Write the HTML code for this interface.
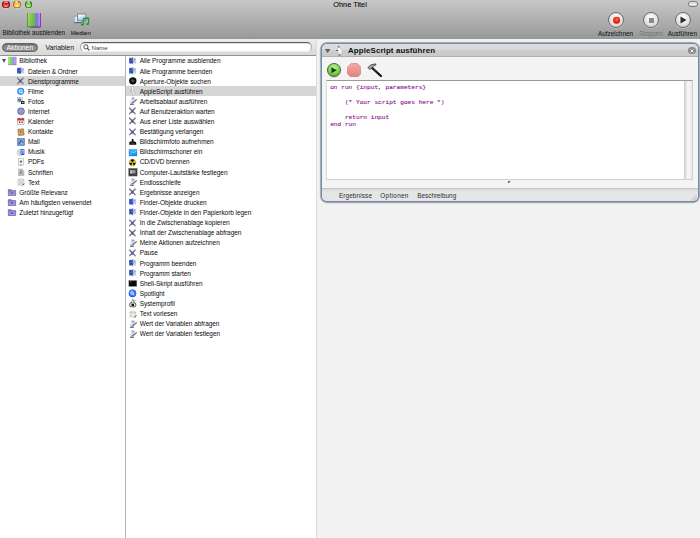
<!DOCTYPE html>
<html><head><meta charset="utf-8">
<style>
*{margin:0;padding:0;box-sizing:border-box}
html,body{width:700px;height:538px;overflow:hidden;background:#f2f2f2;font-family:"Liberation Sans",sans-serif;color:#111}
.abs{position:absolute}
#toolbar{position:absolute;left:0;top:0;width:700px;height:38.6px;background:linear-gradient(#c8c8c8,#989898)}
.light{position:absolute;top:0.5px;width:7.6px;height:7.6px;border-radius:50%}
#title{position:absolute;left:0;width:700px;top:0;text-align:center;font-size:7.4px;line-height:9px;color:#000;-webkit-text-stroke:0.05px #000}
.tlabel{position:absolute;font-size:6.4px;line-height:7.8px;color:#141418;white-space:nowrap;-webkit-text-stroke:0.04px #000}
.rbtn{position:absolute;top:12px;width:16px;height:16px;border-radius:50%;background:radial-gradient(circle at 50% 35%,#fdfdfd,#e4e4e4 55%,#b8b8b8);border:0.8px solid #6a6a6a;box-shadow:0 0.6px 0.6px rgba(255,255,255,.6)}
#filter{position:absolute;left:0;top:38.6px;width:316px;height:17.2px;background:linear-gradient(#ececec,#d8d8d8);border-bottom:1px solid #939393}
#pill{position:absolute;left:1.9px;top:43px;padding-top:0.3px;width:36px;height:9px;border-radius:4.5px;background:#8b8b8b;border:0.7px solid #666;color:#fff;font-size:6.9px;line-height:7.6px;text-align:center;box-shadow:inset 0 0.8px 1px rgba(0,0,0,.3)}
#var{position:absolute;left:45.4px;top:44.2px;font-size:6.9px;line-height:7.6px;color:#111}
#search{position:absolute;left:80.2px;top:42px;width:231.8px;height:10.4px;border-radius:5.2px;background:#fff;border:1px solid #a8a8a8;border-top-color:#5e5e5e;border-bottom-color:#ececec;box-shadow:inset 0 0.6px 0.6px rgba(0,0,0,.25)}
#search .t{position:absolute;left:10.3px;top:1.2px;font-size:6.1px;line-height:7px;color:#404048}
.pane{position:absolute;top:55.8px;height:482.2px;background:#fff;overflow:hidden}
#lp{left:0;width:124.8px}
#rp{left:126.4px;width:189.6px}
#div1{position:absolute;left:124.8px;top:55.8px;width:1.6px;height:482.2px;background:#b4b4b4}
#div2{position:absolute;left:316px;top:38.6px;width:1.4px;height:500px;background:linear-gradient(90deg,#cfcfcf,#e8e8e8)}
.row{position:absolute;left:0;width:100%;height:10.11px}
.row.sel{background:#d6d6d6}
.row .ic{position:absolute;top:1.0px;width:8px;height:8px}
.ic svg{overflow:visible}
.ic svg,svg{display:block}
.row .t{position:absolute;top:1.6px;font-size:6.5px;letter-spacing:-0.05px;line-height:7px;white-space:nowrap;color:#0a0a0a}
.tri{position:absolute;left:2px;top:3.2px;width:0;height:0;border-left:2.4px solid transparent;border-right:2.4px solid transparent;border-top:4px solid #555}
#box{position:absolute;left:321.5px;top:43.8px;width:376.3px;height:156.9px;border-radius:5px;box-shadow:0 0 0 1.5px #7b8aa2,0 0 0 2.3px rgba(140,152,175,.35),0 2px 2px rgba(0,0,0,.12);background:#f4f4f4;overflow:hidden}
#bhead{position:absolute;left:0;top:0.3px;width:100%;height:13.2px;background:linear-gradient(#dedede,#dadada 45%,#cdcdcd 50%,#cacaca);border-bottom:0.8px solid #b0b0b0}
#btitle{position:absolute;left:26.5px;top:1.6px;letter-spacing:0.12px;font-size:7.9px;line-height:9px;font-weight:bold;color:#111;white-space:nowrap}
#code{position:absolute;left:4.5px;top:36.3px;width:367px;height:99.6px;background:#fff;border-top:1px solid #9a9a9a;border-left:0.6px solid #d8d8d8;border-right:0.6px solid #d0d0d0;border-bottom:0.6px solid #d0d0d0}
#code pre{position:absolute;left:3.2px;top:3.0px;font-family:"Liberation Mono",monospace;font-size:6.15px;line-height:7.4px;color:#86108e;-webkit-text-stroke:0.1px #86108e}
#scroll{position:absolute;right:0;top:0;width:8px;height:100%;background:linear-gradient(90deg,#d8d8d8,#f8f8f8 40%,#eaeaea);border-left:0.6px solid #cfcfcf}
#bbar{position:absolute;left:0;top:144.5px;width:100%;height:14px;background:linear-gradient(#d8d8d8,#e6e6e6 25%,#e6e6e6);border-top:0.8px solid #c4c4c4}
.blabel{position:absolute;top:2.4px;font-size:6.3px;line-height:7px;color:#2a2a2a;white-space:nowrap}
</style></head><body>
<div id="toolbar"></div>
<div class="light" style="left:2.2px;background:radial-gradient(circle at 50% 75%,#ff9a9a 0,#e84848 35%,#c01818 70%,#a00c0c 100%);box-shadow:inset 0 0 0 0.7px rgba(110,0,0,.8),0 0.5px 0.6px rgba(255,255,255,.45)"><div class="abs" style="left:2.6px;top:2.6px;width:2.4px;height:2.4px;border-radius:50%;background:rgba(90,0,0,.55)"></div><div class="abs" style="left:2.2px;top:0.8px;width:3.2px;height:1.6px;border-radius:50%;background:rgba(255,230,230,.6)"></div></div>
<div class="light" style="left:13.1px;background:radial-gradient(circle at 50% 75%,#fff09a 0,#f8c850 35%,#e89a20 70%,#c07010 100%);box-shadow:inset 0 0 0 0.7px rgba(140,80,0,.8),0 0.5px 0.6px rgba(255,255,255,.45)"><div class="abs" style="left:2.2px;top:0.8px;width:3.2px;height:1.6px;border-radius:50%;background:rgba(255,250,230,.7)"></div></div>
<div class="light" style="left:24.5px;background:radial-gradient(circle at 50% 75%,#c8f8a0 0,#88d058 35%,#50a828 70%,#3a8a18 100%);box-shadow:inset 0 0 0 0.7px rgba(30,80,0,.8),0 0.5px 0.6px rgba(255,255,255,.45)"><div class="abs" style="left:2.2px;top:0.8px;width:3.2px;height:1.6px;border-radius:50%;background:rgba(240,255,230,.7)"></div></div>
<div id="title">Ohne Titel</div>
<!-- library icon -->
<div class="abs" style="left:27.2px;top:13px;width:14px;height:13.6px;box-shadow:0 0.8px 0.8px rgba(0,0,0,.35)">
 <div class="abs" style="left:0;top:0;width:7.4px;height:13.6px;background:linear-gradient(100deg,#a8e070,#7cc048 60%,#6ab03a);box-shadow:inset 0.6px -0.6px 0 rgba(40,60,30,.7)"></div>
 <div class="abs" style="left:7.4px;top:0;width:2.2px;height:13.6px;background:linear-gradient(90deg,#3a70c0,#7ab0f0,#3a70c0);box-shadow:inset 0 -0.6px 0 rgba(30,40,80,.7)"></div>
 <div class="abs" style="left:9.6px;top:0;width:4.4px;height:13.6px;background:linear-gradient(90deg,#9a58c8,#c890f0 50%,#a060d0);box-shadow:inset -0.6px -0.6px 0 rgba(60,30,90,.7)"></div>
</div>
<div class="tlabel" style="left:2.6px;top:29.2px">Bibliothek ausblenden</div>
<!-- medien icon -->
<svg class="abs" style="left:73px;top:13px" width="17" height="13" viewBox="0 0 17 13">
<defs><linearGradient id="mb" x1="0" y1="0" x2="0" y2="1"><stop offset="0" stop-color="#f0f6ff"/><stop offset="1" stop-color="#9cc4ec"/></linearGradient></defs>
<rect x="1.2" y="3.2" width="7.6" height="6.6" fill="#dce8f6" stroke="#8a96a8" stroke-width="0.7"/>
<rect x="4.4" y="1" width="8.4" height="6.8" fill="url(#mb)" stroke="#6a7a90" stroke-width="0.8"/>
<path d="M5.5 2.6h3M5.5 4.2h2" stroke="#fff" stroke-width="0.8"/>
<rect x="1.5" y="9.2" width="7" height="0.9" fill="#404a58"/>
<path d="M10.4 11.4V5.6L15.6 5.2V10.8" stroke="#1a9a2a" stroke-width="1.1" fill="none"/>
<path d="M10.4 5.6L15.6 5.2" stroke="#1a9a2a" stroke-width="1.5"/>
<ellipse cx="9.4" cy="11.6" rx="1.5" ry="1.1" fill="#1a9a2a"/>
<ellipse cx="14.6" cy="11" rx="1.5" ry="1.1" fill="#1a9a2a"/>
</svg>
<div class="tlabel" style="left:70.7px;top:29.2px;font-size:6.2px">Medien</div>
<!-- right toolbar -->
<div class="abs" style="left:688px;top:1.2px;width:10.4px;height:5.9px;border-radius:2.9px;background:linear-gradient(#e8e8e8,#d8d8d8 45%,#fafafa 55%,#c8c8c8);border:1px solid #7a7a7a"></div>
<div class="rbtn" style="left:607.7px"><svg class="abs" style="left:0;top:0" width="14.4" height="14.4" viewBox="0 0 14.4 14.4"><defs><radialGradient id="rd" cx="50%" cy="40%" r="55%"><stop offset="0" stop-color="#ff6a4a"/><stop offset="1" stop-color="#dd0800"/></radialGradient></defs><circle cx="7.6" cy="7.3" r="3.5" fill="url(#rd)"/></svg></div>
<div class="rbtn" style="left:642.6px"><div class="abs" style="left:5px;top:5px;width:5.4px;height:5.4px;background:#8a8a8a"></div></div>
<div class="rbtn" style="left:674.5px"><svg class="abs" style="left:4px;top:3.2px" width="7" height="8" viewBox="0 0 7 8"><path d="M0.5 0.5L6.5 4L0.5 7.5z" fill="#2e2e2e"/></svg></div>
<div class="tlabel" style="left:597.9px;top:29.8px">Aufzeichnen</div>
<div class="tlabel" style="left:639px;top:29.8px;color:#6e6e6e;-webkit-text-stroke:0;text-shadow:0 0.7px 0 rgba(255,255,255,.18)">Stoppen</div>
<div class="tlabel" style="left:667.8px;top:29.8px">Ausführen</div>

<div id="filter"></div>
<div id="pill">Aktionen</div>
<div id="var">Variablen</div>
<div id="search"><svg class="abs" style="left:2.1px;top:0.9px" width="7" height="7" viewBox="0 0 7 7"><circle cx="2.9" cy="2.9" r="2.1" fill="none" stroke="#3a3a3a" stroke-width="0.9"/><path d="M4.4 4.4L6.4 6.4" stroke="#3a3a3a" stroke-width="1.2"/></svg><div class="t">Name</div></div>

<div class="pane" id="lp"><div style="position:absolute;left:0;top:-55.8px;width:100%;height:600px">
<div class="row" style="top:55.80px"><div class="tri"></div><div class="ic" style="left:8.3px"><svg viewBox="0 0 16 16" width="100%" height="100%"><rect x="0" y="-0.4" width="8.2" height="16" fill="#8ed05a"/><rect x="0.8" y="0" width="2.4" height="15" fill="#b8ea8a"/><rect x="8.2" y="-0.4" width="4" height="16" fill="#5a9ae0"/><rect x="9.4" y="0" width="1.4" height="15" fill="#9ac8f8"/><rect x="12.2" y="-0.4" width="4.8" height="16" fill="#b07ce0"/><rect x="13.2" y="0" width="1.6" height="15" fill="#d0a8f4"/><path d="M0 15.6H17" stroke="#555" stroke-width="0.8"/></svg></div><div class="t" style="left:19.3px">Bibliothek</div></div>
<div class="row" style="top:65.91px"><div class="ic" style="left:17.2px"><svg viewBox="0 0 16 16" width="100%" height="100%"><rect x="0.3" y="1.8" width="13.8" height="11" fill="#bccbf0"/><rect x="0.3" y="1.8" width="7" height="11" fill="#3a60c8"/><path d="M8 0L6.2 4.5L8.5 7.5L6.5 12.5L8 15" stroke="#333" stroke-width="0.9" fill="none"/><path d="M2.5 5h1.5M10 5h1.5M2.5 9.5c1.5 1 3 1 4.5 0.3" stroke="#0a1a70" stroke-width="1.1" fill="none"/></svg></div><div class="t" style="left:27.9px">Dateien &amp; Ordner</div></div>
<div class="row sel" style="top:76.02px"><div class="ic" style="left:17.2px"><svg viewBox="0 0 16 16" width="100%" height="100%"><path d="M1.2 2.2L12.3 13.4M12.3 2.2L1.2 13.4" stroke="#8886ae" stroke-width="3" stroke-linecap="round"/><path d="M3.5 4.5L10 11.1M10 4.5L3.5 11.1" stroke="#4c4a64" stroke-width="1.8"/></svg></div><div class="t" style="left:27.9px">Dienstprogramme</div></div>
<div class="row" style="top:86.13px"><div class="ic" style="left:17.2px"><svg viewBox="0 0 16 16" width="100%" height="100%"><circle cx="7.5" cy="8.5" r="7" fill="#1a7ae0"/><circle cx="7.5" cy="8.5" r="6" fill="#3a98f0"/><circle cx="7.5" cy="8.5" r="3" fill="none" stroke="#fff" stroke-width="2"/><path d="M9.5 10.5l3 3" stroke="#fff" stroke-width="2"/></svg></div><div class="t" style="left:27.9px">Filme</div></div>
<div class="row" style="top:96.24px"><div class="ic" style="left:17.2px"><svg viewBox="0 0 16 16" width="100%" height="100%"><rect x="1" y="1" width="10" height="9" fill="#e8e0d0" stroke="#777" stroke-width=".6"/><circle cx="5" cy="6" r="3.5" fill="#3a80e0"/><path d="M6 9l2-3" stroke="#a03010" stroke-width="1.5"/><rect x="8" y="8" width="7" height="6" rx="1" fill="#222"/><rect x="10" y="10" width="3" height="2" fill="#ddd"/></svg></div><div class="t" style="left:27.9px">Fotos</div></div>
<div class="row" style="top:106.35px"><div class="ic" style="left:17.2px"><svg viewBox="0 0 16 16" width="100%" height="100%"><circle cx="8" cy="8.5" r="7" fill="#6a74b0" stroke="#40487a" stroke-width=".8"/><circle cx="8" cy="8.5" r="4.5" fill="none" stroke="#d0d4ec" stroke-width="1"/><path d="M1.5 8.5h13M8 1.5v14" stroke="#c0c6e4" stroke-width="1" fill="none"/></svg></div><div class="t" style="left:27.9px">Internet</div></div>
<div class="row" style="top:116.46px"><div class="ic" style="left:17.2px"><svg viewBox="0 0 16 16" width="100%" height="100%"><rect x="1" y="3" width="13" height="12" fill="#f8f8f8" stroke="#666" stroke-width=".8"/><rect x="1" y="3" width="13" height="4" fill="#e02a2a"/><circle cx="4" cy="2.5" r="1.2" fill="#c02020"/><circle cx="11" cy="2.5" r="1.2" fill="#c02020"/><rect x="4" y="9" width="2.5" height="3" fill="#222"/><rect x="9" y="9" width="2.5" height="3" fill="#444"/></svg></div><div class="t" style="left:27.9px">Kalender</div></div>
<div class="row" style="top:126.57px"><div class="ic" style="left:17.2px"><svg viewBox="0 0 16 16" width="100%" height="100%"><path d="M1.5 2.5L13 1.5L14.5 14L3 15.5z" fill="#c49a50" stroke="#6a4a20" stroke-width=".8"/><rect x="5" y="5" width="5" height="6" fill="#e0c080"/><circle cx="7.5" cy="7.5" r="1.8" fill="#8a6030"/></svg></div><div class="t" style="left:27.9px">Kontakte</div></div>
<div class="row" style="top:136.68px"><div class="ic" style="left:17.2px"><svg viewBox="0 0 16 16" width="100%" height="100%"><rect x="1" y="1" width="14" height="14" fill="#5a88e0" stroke="#2a4a90" stroke-width=".8"/><rect x="3" y="3" width="10" height="10" fill="#8ab0f0"/><path d="M4 12L8 5L12 9" stroke="#3a2a10" stroke-width="1.8" fill="none"/></svg></div><div class="t" style="left:27.9px">Mail</div></div>
<div class="row" style="top:146.79px"><div class="ic" style="left:17.2px"><svg viewBox="0 0 16 16" width="100%" height="100%"><circle cx="6.5" cy="9" r="6.5" fill="#dfe8f2" stroke="#7a8aa0" stroke-width=".6"/><path d="M3 6l4 4M3 12l3-3" stroke="#e0a030" stroke-width="1.2"/><rect x="7" y="2" width="8" height="12" rx="1.5" fill="#2a6ae0"/><path d="M9.5 12V5l4-1v7" stroke="#fff" stroke-width="1.2" fill="none"/></svg></div><div class="t" style="left:27.9px">Musik</div></div>
<div class="row" style="top:156.90px"><div class="ic" style="left:17.2px"><svg viewBox="0 0 16 16" width="100%" height="100%"><rect x="2.5" y="1" width="11" height="14.5" fill="#fcfcfc" stroke="#888" stroke-width=".8"/><path d="M5 8l3-4 3 3-3 3z" fill="#5070c0"/><path d="M6 7l2 2" stroke="#a04020" stroke-width="1.4"/><path d="M5 13h5" stroke="#666" stroke-width="1"/></svg></div><div class="t" style="left:27.9px">PDFs</div></div>
<div class="row" style="top:167.01px"><div class="ic" style="left:17.2px"><svg viewBox="0 0 16 16" width="100%" height="100%"><path d="M3 2h7l4 4v9H3z" fill="#c8c8c8" stroke="#888" stroke-width=".8"/><path d="M5 13l3-8 3 8M6 10h4" stroke="#6a6a6a" stroke-width="1.2" fill="none"/></svg></div><div class="t" style="left:27.9px">Schriften</div></div>
<div class="row" style="top:177.12px"><div class="ic" style="left:17.2px"><svg viewBox="0 0 16 16" width="100%" height="100%"><ellipse cx="8" cy="4" rx="6" ry="2.5" fill="#f4f4f4" stroke="#888" stroke-width=".7"/><rect x="2" y="4" width="12" height="10" fill="#ececec" stroke="#888" stroke-width=".7"/><path d="M4 8h8M4 10.5h8" stroke="#999" stroke-width=".8"/><path d="M11 15l3-4" stroke="#222" stroke-width="1.4"/></svg></div><div class="t" style="left:27.9px">Text</div></div>
<div class="row" style="top:187.23px"><div class="ic" style="left:8.3px"><svg viewBox="0 0 16 16" width="100%" height="100%"><path d="M0.5 3h6l1.5 2h7.5v10h-15z" fill="#8a74c8" stroke="#5a4a98" stroke-width=".7"/><rect x="0.5" y="6" width="15" height="9" fill="#a898e0" stroke="#5a4a98" stroke-width=".7"/><rect x="5" y="8" width="6" height="4" rx="1" fill="#7a68b8"/></svg></div><div class="t" style="left:19.3px">Größte Relevanz</div></div>
<div class="row" style="top:197.34px"><div class="ic" style="left:8.3px"><svg viewBox="0 0 16 16" width="100%" height="100%"><path d="M0.5 3h6l1.5 2h7.5v10h-15z" fill="#8a74c8" stroke="#5a4a98" stroke-width=".7"/><rect x="0.5" y="6" width="15" height="9" fill="#a898e0" stroke="#5a4a98" stroke-width=".7"/><rect x="5" y="8" width="6" height="4" rx="1" fill="#7a68b8"/></svg></div><div class="t" style="left:19.3px">Am häufigsten verwendet</div></div>
<div class="row" style="top:207.45px"><div class="ic" style="left:8.3px"><svg viewBox="0 0 16 16" width="100%" height="100%"><path d="M0.5 3h6l1.5 2h7.5v10h-15z" fill="#8a74c8" stroke="#5a4a98" stroke-width=".7"/><rect x="0.5" y="6" width="15" height="9" fill="#a898e0" stroke="#5a4a98" stroke-width=".7"/><rect x="5" y="8" width="6" height="4" rx="1" fill="#7a68b8"/></svg></div><div class="t" style="left:19.3px">Zuletzt hinzugefügt</div></div>
</div></div>
<div id="div1"></div>
<div class="pane" id="rp"><div style="position:absolute;left:0;top:-55.8px;width:100%;height:600px">
<div class="row" style="top:55.80px"><div class="ic" style="left:2.4px"><svg viewBox="0 0 16 16" width="100%" height="100%"><rect x="0.3" y="1.8" width="13.8" height="11" fill="#bccbf0"/><rect x="0.3" y="1.8" width="7" height="11" fill="#3a60c8"/><path d="M8 0L6.2 4.5L8.5 7.5L6.5 12.5L8 15" stroke="#333" stroke-width="0.9" fill="none"/><path d="M2.5 5h1.5M10 5h1.5M2.5 9.5c1.5 1 3 1 4.5 0.3" stroke="#0a1a70" stroke-width="1.1" fill="none"/></svg></div><div class="t" style="left:13.3px">Alle Programme ausblenden</div></div>
<div class="row" style="top:65.91px"><div class="ic" style="left:2.4px"><svg viewBox="0 0 16 16" width="100%" height="100%"><rect x="0.3" y="1.8" width="13.8" height="11" fill="#bccbf0"/><rect x="0.3" y="1.8" width="7" height="11" fill="#3a60c8"/><path d="M8 0L6.2 4.5L8.5 7.5L6.5 12.5L8 15" stroke="#333" stroke-width="0.9" fill="none"/><path d="M2.5 5h1.5M10 5h1.5M2.5 9.5c1.5 1 3 1 4.5 0.3" stroke="#0a1a70" stroke-width="1.1" fill="none"/></svg></div><div class="t" style="left:13.3px">Alle Programme beenden</div></div>
<div class="row" style="top:76.02px"><div class="ic" style="left:2.4px"><svg viewBox="0 0 16 16" width="100%" height="100%"><circle cx="7.6" cy="7.7" r="7.4" fill="#080808"/><circle cx="7.6" cy="7.7" r="5" fill="#151a18"/><circle cx="6.5" cy="6.5" r="2.2" fill="#2a7a3a"/><circle cx="8.8" cy="9" r="2.2" fill="#5a2a8a"/><circle cx="7.8" cy="7.6" r="1.2" fill="#a03a5a"/></svg></div><div class="t" style="left:13.3px">Aperture-Objekte suchen</div></div>
<div class="row sel" style="top:86.13px"><div class="ic" style="left:2.4px"><svg viewBox="0 0 16 16" width="100%" height="100%"><path d="M6 0.5c2.5 1 3 3 1.5 5s-1 4 1.5 5.5 2 3.5-0.5 5.5" stroke="#9a9a9a" stroke-width="4.2" fill="none" stroke-linecap="round"/><path d="M6 0.5c2.5 1 3 3 1.5 5s-1 4 1.5 5.5 2 3.5-0.5 5.5" stroke="#f6f2f2" stroke-width="2.8" fill="none" stroke-linecap="round"/><path d="M2 7.5h3" stroke="#777" stroke-width="1.2"/></svg></div><div class="t" style="left:13.3px">AppleScript ausführen</div></div>
<div class="row" style="top:96.24px"><div class="ic" style="left:2.4px"><svg viewBox="0 0 16 16" width="100%" height="100%"><ellipse cx="8" cy="3.4" rx="3.4" ry="2.9" fill="#f0f0f0" stroke="#9a9a9a" stroke-width=".6"/><ellipse cx="8" cy="3.6" rx="2.2" ry="1.6" fill="#3aa4f4"/><path d="M3 8.5c2-1.5 5-1.5 6.5 0v6.5H3z" fill="#ececec" stroke="#9a9a9a" stroke-width=".6"/><path d="M6 12.5L14.8 5.5" stroke="#6a6a80" stroke-width="2.4" stroke-linecap="round"/><path d="M2 14.8h7.5" stroke="#5a5a70" stroke-width="1.8"/></svg></div><div class="t" style="left:13.3px">Arbeitsablauf ausführen</div></div>
<div class="row" style="top:106.35px"><div class="ic" style="left:2.4px"><svg viewBox="0 0 16 16" width="100%" height="100%"><path d="M1.2 2.2L12.3 13.4M12.3 2.2L1.2 13.4" stroke="#8886ae" stroke-width="3" stroke-linecap="round"/><path d="M3.5 4.5L10 11.1M10 4.5L3.5 11.1" stroke="#4c4a64" stroke-width="1.8"/></svg></div><div class="t" style="left:13.3px">Auf Benutzeraktion warten</div></div>
<div class="row" style="top:116.46px"><div class="ic" style="left:2.4px"><svg viewBox="0 0 16 16" width="100%" height="100%"><path d="M1.2 2.2L12.3 13.4M12.3 2.2L1.2 13.4" stroke="#8886ae" stroke-width="3" stroke-linecap="round"/><path d="M3.5 4.5L10 11.1M10 4.5L3.5 11.1" stroke="#4c4a64" stroke-width="1.8"/></svg></div><div class="t" style="left:13.3px">Aus einer Liste auswählen</div></div>
<div class="row" style="top:126.57px"><div class="ic" style="left:2.4px"><svg viewBox="0 0 16 16" width="100%" height="100%"><path d="M1.2 2.2L12.3 13.4M12.3 2.2L1.2 13.4" stroke="#8886ae" stroke-width="3" stroke-linecap="round"/><path d="M3.5 4.5L10 11.1M10 4.5L3.5 11.1" stroke="#4c4a64" stroke-width="1.8"/></svg></div><div class="t" style="left:13.3px">Bestätigung verlangen</div></div>
<div class="row" style="top:136.68px"><div class="ic" style="left:2.4px"><svg viewBox="0 0 16 16" width="100%" height="100%"><path d="M0.5 13.5V9l2-2h3V2.5L7.5 1.5L9 3v4h3l2.5 2.5v4z" fill="#0c0c0c"/><rect x="3.5" y="9.5" width="7" height="2" fill="#4a4a4a"/></svg></div><div class="t" style="left:13.3px">Bildschirmfoto aufnehmen</div></div>
<div class="row" style="top:146.79px"><div class="ic" style="left:2.4px"><svg viewBox="0 0 16 16" width="100%" height="100%"><rect x="0" y="3" width="16" height="13" fill="#1896f4" stroke="#2a5ac0" stroke-width=".6"/><rect x="1" y="4" width="14" height="5" fill="#40c8ff" opacity=".6"/><path d="M2 14c2-3 3-6 5-6s2 3 4 2 2-4 4-5" stroke="#b0f0ff" stroke-width="1.2" fill="none"/></svg></div><div class="t" style="left:13.3px">Bildschirmschoner ein</div></div>
<div class="row" style="top:156.90px"><div class="ic" style="left:2.4px"><svg viewBox="0 0 16 16" width="100%" height="100%"><circle cx="6.9" cy="9.2" r="6.5" fill="#e8d020" stroke="#3a3000" stroke-width=".6"/><path d="M6.9 9.2L3.2 3.9A6.3 6.3 0 0 1 10.6 3.9z M6.9 9.2l6.2 1a6.3 6.3 0 0 1-3.6 5z M6.9 9.2l-2.6 5.9a6.3 6.3 0 0 1-3.6-5z" fill="#111"/><circle cx="6.9" cy="9.2" r="1" fill="#e8d020"/></svg></div><div class="t" style="left:13.3px">CD/DVD brennen</div></div>
<div class="row" style="top:167.01px"><div class="ic" style="left:2.4px"><svg viewBox="0 0 16 16" width="100%" height="100%"><rect x="-0.8" y="0.6" width="17.2" height="15.6" fill="#3c3c3c" stroke="#8a8a8a" stroke-width=".8"/><rect x="2.5" y="4" width="4.5" height="7" fill="#e8e8e8"/><rect x="8" y="4" width="5" height="7" fill="#9a9a9a"/><path d="M3 6h3" stroke="#222" stroke-width="1"/></svg></div><div class="t" style="left:13.3px">Computer-Lautstärke festlegen</div></div>
<div class="row" style="top:177.12px"><div class="ic" style="left:2.4px"><svg viewBox="0 0 16 16" width="100%" height="100%"><ellipse cx="8" cy="3.4" rx="3.4" ry="2.9" fill="#f0f0f0" stroke="#9a9a9a" stroke-width=".6"/><ellipse cx="8" cy="3.6" rx="2.2" ry="1.6" fill="#3aa4f4"/><path d="M3 8.5c2-1.5 5-1.5 6.5 0v6.5H3z" fill="#ececec" stroke="#9a9a9a" stroke-width=".6"/><path d="M6 12.5L14.8 5.5" stroke="#6a6a80" stroke-width="2.4" stroke-linecap="round"/><path d="M2 14.8h7.5" stroke="#5a5a70" stroke-width="1.8"/></svg></div><div class="t" style="left:13.3px">Endlosschleife</div></div>
<div class="row" style="top:187.23px"><div class="ic" style="left:2.4px"><svg viewBox="0 0 16 16" width="100%" height="100%"><path d="M1.2 2.2L12.3 13.4M12.3 2.2L1.2 13.4" stroke="#8886ae" stroke-width="3" stroke-linecap="round"/><path d="M3.5 4.5L10 11.1M10 4.5L3.5 11.1" stroke="#4c4a64" stroke-width="1.8"/></svg></div><div class="t" style="left:13.3px">Ergebnisse anzeigen</div></div>
<div class="row" style="top:197.34px"><div class="ic" style="left:2.4px"><svg viewBox="0 0 16 16" width="100%" height="100%"><rect x="0.3" y="1.8" width="13.8" height="11" fill="#bccbf0"/><rect x="0.3" y="1.8" width="7" height="11" fill="#3a60c8"/><path d="M8 0L6.2 4.5L8.5 7.5L6.5 12.5L8 15" stroke="#333" stroke-width="0.9" fill="none"/><path d="M2.5 5h1.5M10 5h1.5M2.5 9.5c1.5 1 3 1 4.5 0.3" stroke="#0a1a70" stroke-width="1.1" fill="none"/></svg></div><div class="t" style="left:13.3px">Finder-Objekte drucken</div></div>
<div class="row" style="top:207.45px"><div class="ic" style="left:2.4px"><svg viewBox="0 0 16 16" width="100%" height="100%"><rect x="0.3" y="1.8" width="13.8" height="11" fill="#bccbf0"/><rect x="0.3" y="1.8" width="7" height="11" fill="#3a60c8"/><path d="M8 0L6.2 4.5L8.5 7.5L6.5 12.5L8 15" stroke="#333" stroke-width="0.9" fill="none"/><path d="M2.5 5h1.5M10 5h1.5M2.5 9.5c1.5 1 3 1 4.5 0.3" stroke="#0a1a70" stroke-width="1.1" fill="none"/></svg></div><div class="t" style="left:13.3px">Finder-Objekte in den Papierkorb legen</div></div>
<div class="row" style="top:217.56px"><div class="ic" style="left:2.4px"><svg viewBox="0 0 16 16" width="100%" height="100%"><path d="M1.2 2.2L12.3 13.4M12.3 2.2L1.2 13.4" stroke="#8886ae" stroke-width="3" stroke-linecap="round"/><path d="M3.5 4.5L10 11.1M10 4.5L3.5 11.1" stroke="#4c4a64" stroke-width="1.8"/></svg></div><div class="t" style="left:13.3px">In die Zwischenablage kopieren</div></div>
<div class="row" style="top:227.67px"><div class="ic" style="left:2.4px"><svg viewBox="0 0 16 16" width="100%" height="100%"><path d="M1.2 2.2L12.3 13.4M12.3 2.2L1.2 13.4" stroke="#8886ae" stroke-width="3" stroke-linecap="round"/><path d="M3.5 4.5L10 11.1M10 4.5L3.5 11.1" stroke="#4c4a64" stroke-width="1.8"/></svg></div><div class="t" style="left:13.3px">Inhalt der Zwischenablage abfragen</div></div>
<div class="row" style="top:237.78px"><div class="ic" style="left:2.4px"><svg viewBox="0 0 16 16" width="100%" height="100%"><ellipse cx="8" cy="3.4" rx="3.4" ry="2.9" fill="#f0f0f0" stroke="#9a9a9a" stroke-width=".6"/><ellipse cx="8" cy="3.6" rx="2.2" ry="1.6" fill="#3aa4f4"/><path d="M3 8.5c2-1.5 5-1.5 6.5 0v6.5H3z" fill="#ececec" stroke="#9a9a9a" stroke-width=".6"/><path d="M6 12.5L14.8 5.5" stroke="#6a6a80" stroke-width="2.4" stroke-linecap="round"/><path d="M2 14.8h7.5" stroke="#5a5a70" stroke-width="1.8"/></svg></div><div class="t" style="left:13.3px">Meine Aktionen aufzeichnen</div></div>
<div class="row" style="top:247.89px"><div class="ic" style="left:2.4px"><svg viewBox="0 0 16 16" width="100%" height="100%"><path d="M1.2 2.2L12.3 13.4M12.3 2.2L1.2 13.4" stroke="#8886ae" stroke-width="3" stroke-linecap="round"/><path d="M3.5 4.5L10 11.1M10 4.5L3.5 11.1" stroke="#4c4a64" stroke-width="1.8"/></svg></div><div class="t" style="left:13.3px">Pause</div></div>
<div class="row" style="top:258.00px"><div class="ic" style="left:2.4px"><svg viewBox="0 0 16 16" width="100%" height="100%"><rect x="0.3" y="1.8" width="13.8" height="11" fill="#bccbf0"/><rect x="0.3" y="1.8" width="7" height="11" fill="#3a60c8"/><path d="M8 0L6.2 4.5L8.5 7.5L6.5 12.5L8 15" stroke="#333" stroke-width="0.9" fill="none"/><path d="M2.5 5h1.5M10 5h1.5M2.5 9.5c1.5 1 3 1 4.5 0.3" stroke="#0a1a70" stroke-width="1.1" fill="none"/></svg></div><div class="t" style="left:13.3px">Programm beenden</div></div>
<div class="row" style="top:268.11px"><div class="ic" style="left:2.4px"><svg viewBox="0 0 16 16" width="100%" height="100%"><rect x="0.3" y="1.8" width="13.8" height="11" fill="#bccbf0"/><rect x="0.3" y="1.8" width="7" height="11" fill="#3a60c8"/><path d="M8 0L6.2 4.5L8.5 7.5L6.5 12.5L8 15" stroke="#333" stroke-width="0.9" fill="none"/><path d="M2.5 5h1.5M10 5h1.5M2.5 9.5c1.5 1 3 1 4.5 0.3" stroke="#0a1a70" stroke-width="1.1" fill="none"/></svg></div><div class="t" style="left:13.3px">Programm starten</div></div>
<div class="row" style="top:278.22px"><div class="ic" style="left:2.4px"><svg viewBox="0 0 16 16" width="100%" height="100%"><rect x="-0.4" y="2.9" width="16" height="12" fill="#0a0a0a" stroke="#999" stroke-width=".6"/><path d="M2 5l2.5 2" stroke="#eee" stroke-width=".9"/></svg></div><div class="t" style="left:13.3px">Shell-Skript ausführen</div></div>
<div class="row" style="top:288.33px"><div class="ic" style="left:2.4px"><svg viewBox="0 0 16 16" width="100%" height="100%"><circle cx="7" cy="8.8" r="7.6" fill="#1a5ae8"/><circle cx="7" cy="8" r="6.5" fill="#3a7af8"/><circle cx="6" cy="7.8" r="2.6" fill="none" stroke="#fff" stroke-width="1.6"/><path d="M8 9.8l2.5 2.5" stroke="#fff" stroke-width="1.8"/></svg></div><div class="t" style="left:13.3px">Spotlight</div></div>
<div class="row" style="top:298.44px"><div class="ic" style="left:2.4px"><svg viewBox="0 0 16 16" width="100%" height="100%"><path d="M7.5 0.5L4 8M7.5 0.5L11 8M8 4l5-1" stroke="#222" stroke-width=".9" fill="none"/><rect x="1.5" y="8" width="12" height="7.5" rx="2" fill="#fff" stroke="#111" stroke-width="1.4"/><rect x="5" y="10" width="5" height="4" fill="#111"/></svg></div><div class="t" style="left:13.3px">Systemprofil</div></div>
<div class="row" style="top:308.55px"><div class="ic" style="left:2.4px"><svg viewBox="0 0 16 16" width="100%" height="100%"><ellipse cx="7.5" cy="5" rx="6" ry="3" fill="#f0f0f0" stroke="#999" stroke-width=".7"/><rect x="2" y="5" width="11" height="9" fill="#e8e8e8" stroke="#999" stroke-width=".7"/><circle cx="3" cy="12" r="1.4" fill="#e8c840"/><path d="M11 15.5l4-5" stroke="#333" stroke-width="1.6"/></svg></div><div class="t" style="left:13.3px">Text vorlesen</div></div>
<div class="row" style="top:318.66px"><div class="ic" style="left:2.4px"><svg viewBox="0 0 16 16" width="100%" height="100%"><ellipse cx="8" cy="3.4" rx="3.4" ry="2.9" fill="#f0f0f0" stroke="#9a9a9a" stroke-width=".6"/><ellipse cx="8" cy="3.6" rx="2.2" ry="1.6" fill="#3aa4f4"/><path d="M3 8.5c2-1.5 5-1.5 6.5 0v6.5H3z" fill="#ececec" stroke="#9a9a9a" stroke-width=".6"/><path d="M6 12.5L14.8 5.5" stroke="#6a6a80" stroke-width="2.4" stroke-linecap="round"/><path d="M2 14.8h7.5" stroke="#5a5a70" stroke-width="1.8"/></svg></div><div class="t" style="left:13.3px">Wert der Variablen abfragen</div></div>
<div class="row" style="top:328.77px"><div class="ic" style="left:2.4px"><svg viewBox="0 0 16 16" width="100%" height="100%"><ellipse cx="8" cy="3.4" rx="3.4" ry="2.9" fill="#f0f0f0" stroke="#9a9a9a" stroke-width=".6"/><ellipse cx="8" cy="3.6" rx="2.2" ry="1.6" fill="#3aa4f4"/><path d="M3 8.5c2-1.5 5-1.5 6.5 0v6.5H3z" fill="#ececec" stroke="#9a9a9a" stroke-width=".6"/><path d="M6 12.5L14.8 5.5" stroke="#6a6a80" stroke-width="2.4" stroke-linecap="round"/><path d="M2 14.8h7.5" stroke="#5a5a70" stroke-width="1.8"/></svg></div><div class="t" style="left:13.3px">Wert der Variablen festlegen</div></div>
</div></div>
<div id="div2"></div>

<div id="box">
 <div id="bhead">
  <svg class="abs" style="left:3.9px;top:4.6px" width="5.4" height="4.2" viewBox="0 0 5.4 4.2"><path d="M0 0H5.4L2.7 4.2z" fill="#5e5e5e"/></svg>
  <svg class="abs" style="left:14.5px;top:1.2px" width="7" height="11" viewBox="0 0 7 11"><path d="M3 0.8C4.5 1 5.2 2.5 4.6 3.8C6 4.6 6.6 6.5 5.6 7.8C5 8.6 4.4 9 4 9.8L2.6 9.4C2.8 8.2 2.2 7.4 1.2 6.6C0.2 5.6 0.6 4 1.8 3.2C1.6 2 2 1 3 0.8z" fill="#f6f2f4" stroke="#b8b8b8" stroke-width="0.5"/><path d="M2.4 1.6l0.8 0.6M0.6 5.2l1.2 0.4M3 9.8l1 0.4" stroke="#555" stroke-width="1.1" stroke-linecap="round"/></svg>
  <div id="btitle">AppleScript ausführen</div>
  <div class="abs" style="left:366.4px;top:2.6px;width:7.8px;height:7.8px;border-radius:50%;background:#8a8a8a"><svg class="abs" style="left:0;top:0" width="7.8" height="7.8" viewBox="0 0 8 8"><path d="M2.5 2.5L5.5 5.5M5.5 2.5L2.5 5.5" stroke="#fff" stroke-width="1"/></svg></div>
 </div>
 <div class="abs" style="left:5.5px;top:19.2px;width:14.2px;height:14.2px;border-radius:50%;background:radial-gradient(circle at 50% 30%,#b8f088,#88d458 50%,#50a828 85%,#3a7a1a);border:0.5px solid #3e6e28;box-shadow:0 0.8px 0.8px rgba(0,0,0,.2)"><svg class="abs" style="left:3.3px;top:2.9px" width="6.5" height="6.5" viewBox="0 0 7 7"><path d="M0.5 0.3L6.2 3.5L0.5 6.7z" fill="#1e3a16"/></svg></div>
 <svg class="abs" style="left:25.5px;top:19.2px" width="14.4" height="14.4" viewBox="0 0 14 14"><defs><linearGradient id="rg" x1="0" y1="0" x2="0" y2="1"><stop offset="0" stop-color="#f6a8a8"/><stop offset="1" stop-color="#e08080"/></linearGradient></defs><path d="M4.1 0.3h5.8l4 4v5.8l-4 4H4.1l-4-4V4.3z" fill="url(#rg)"/><path d="M4.1 0.3h5.8l4 4v5.8l-4 4H4.1l-4-4V4.3z" fill="none" stroke="#c87070" stroke-width="0.5"/></svg>
 <svg class="abs" style="left:45.5px;top:19.2px" width="15.6" height="14.4" viewBox="0 0 16 14"><path d="M5.2 4.6L14.3 13" stroke="#151515" stroke-width="2.3" stroke-linecap="round"/><path d="M5.6 5L10 9" stroke="#6a6a6a" stroke-width="0.6"/><path d="M0.8 4.4Q3.2 0.6 9 0.5L9.2 1.7Q6.4 2.4 5 4.6L2.8 6.2z" fill="#a8a8a8" stroke="#2a2a2a" stroke-width="0.7" stroke-linejoin="round"/></svg>
 <div id="code"><pre>on run {input, parameters}

    (* Your script goes here *)

    return input
end run</pre><div id="scroll"></div></div>
 <svg class="abs" style="left:186.6px;top:136.8px" width="3" height="2.2" viewBox="0 0 3 2.2"><path d="M0.2 0.2H2.8L1.2 1.2V2.1H0.2z" fill="#222"/></svg>
 <div id="bbar">
  <div class="blabel" style="left:17.4px;letter-spacing:0.17px">Ergebnisse</div>
  <div class="blabel" style="left:58.8px;letter-spacing:0.36px">Optionen</div>
  <div class="blabel" style="left:95.8px;letter-spacing:0.03px">Beschreibung</div>
  <svg class="abs" style="right:1px;bottom:1px" width="8" height="8" viewBox="0 0 8 8"><path d="M7.5 2L2 7.5M7.5 4.5L4.5 7.5M7.5 6.5L6.5 7.5" stroke="#9a9a9a" stroke-width="0.6"/></svg>
 </div>
</div>
</body></html>
